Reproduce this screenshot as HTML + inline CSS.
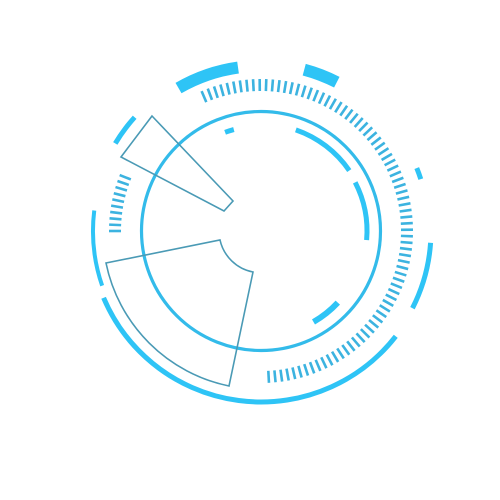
<!DOCTYPE html>
<html><head><meta charset="utf-8"><style>html,body{margin:0;padding:0;background:#fff;width:500px;height:500px;overflow:hidden}</style></head>
<body>
<svg id="s" width="500" height="500" viewBox="0 0 500 500" xmlns="http://www.w3.org/2000/svg">
<circle cx="261" cy="231" r="119.5" fill="none" stroke="#33bbea" stroke-width="3.2"/>
<path d="M152 116 L233 201 L224 211 L121 157 Z" fill="none" stroke="#4a9ab5" stroke-width="1.6"/>
<path d="M220 240 A42 42 0 0 0 253 272 L229 386 A158 158 0 0 1 106 263 Z" fill="none" stroke="#4a9ab5" stroke-width="1.6"/>
</svg>
<script>
var s=document.getElementById('s'),cx=261,cy=231,ns='http://www.w3.org/2000/svg';
function P(r,a){a=a*Math.PI/180;return [cx+r*Math.cos(a),cy+r*Math.sin(a)];}
function arc(r,a1,a2,w,c){var p=P(r,a1),q=P(r,a2),l=((a2-a1+360)%360)>180?1:0;
var e=document.createElementNS(ns,'path');e.setAttribute('d','M'+p[0]+' '+p[1]+' A'+r+' '+r+' 0 '+l+' 1 '+q[0]+' '+q[1]);
e.setAttribute('fill','none');e.setAttribute('stroke',c||'#2ec4f6');e.setAttribute('stroke-width',w);s.appendChild(e);}
function tick(r1,r2,a,w){var p=P(r1,a),q=P(r2,a),e=document.createElementNS(ns,'line');
e.setAttribute('x1',p[0]);e.setAttribute('y1',p[1]);e.setAttribute('x2',q[0]);e.setAttribute('y2',q[1]);
e.setAttribute('stroke','#3cb3e0');e.setAttribute('stroke-width',w);s.appendChild(e);}
for(var a=-113;a<=88;a+=2.5)tick(140,152,a,2.6);
for(var a=180;a<=203;a+=2.4)tick(140,152,a,2.6);
arc(171,38,157,5);
arc(168,161,187,4);
arc(170,4,27,5);
arc(170,211,222,5);
arc(165,240,262,12);
arc(167,285,297,12);
arc(168,338,342,5);
arc(107,289,325.6,5);
arc(106,332.7,364.9,5);
arc(105,43,60,6);
arc(105,250,255,5);
</script>
</body></html>
